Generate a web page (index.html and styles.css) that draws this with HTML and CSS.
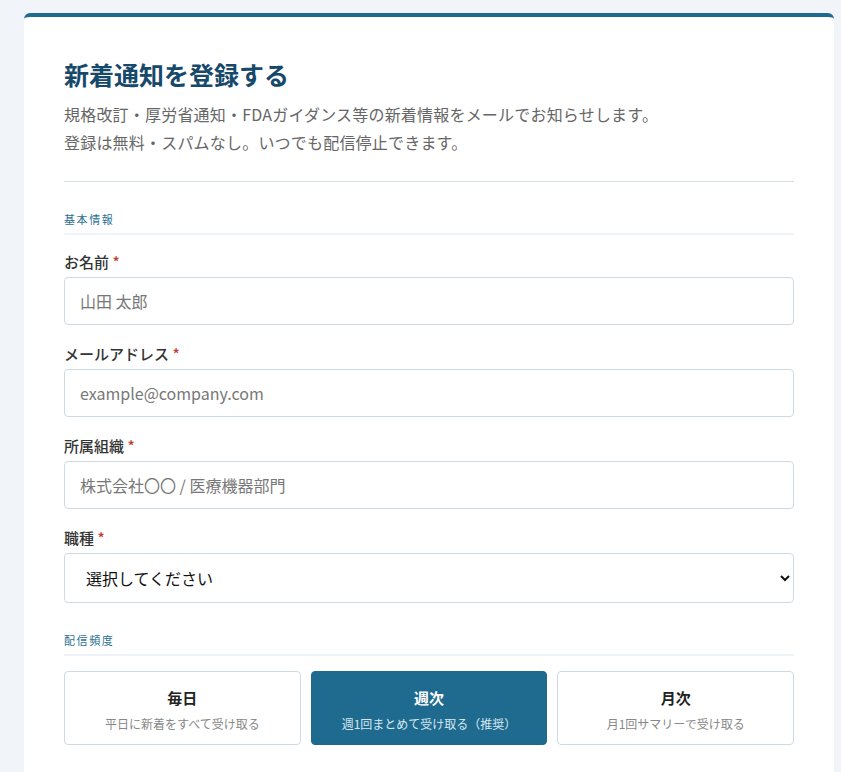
FILE: index.html
```html
<!DOCTYPE html>
<html lang="ja">
<head>
  <meta charset="UTF-8" />
  <title>新着通知を登録する</title>
  <link rel="stylesheet" href="styles.css">
</head>
<body>
  <div class="card">
    <div class="card-head">
      <h1>新着通知を登録する</h1>
      <p class="lead">規格改訂・厚労省通知・FDAガイダンス等の新着情報をメールでお知らせします。<br>登録は無料・スパムなし。いつでも配信停止できます。</p>
    </div>

    <div class="section-title">基本情報</div>

    <div class="field">
      <label for="name">お名前 <span class="req">*</span></label>
      <input id="name" type="text" placeholder="山田 太郎">
    </div>
    <div class="field">
      <label for="email">メールアドレス <span class="req">*</span></label>
      <input id="email" type="email" placeholder="example@company.com">
    </div>
    <div class="field">
      <label for="org">所属組織 <span class="req">*</span></label>
      <input id="org" type="text" placeholder="株式会社〇〇 / 医療機器部門">
    </div>
    <div class="field">
      <label for="job">職種 <span class="req">*</span></label>
      <select id="job">
        <option>選択してください</option>
        <option>品質保証</option>
        <option>薬事</option>
        <option>研究開発</option>
      </select>
    </div>

    <div class="section-title freq-title">配信頻度</div>

    <div class="freq">
      <div class="freq-option">
        <strong>毎日</strong>
        <span>平日に新着をすべて受け取る</span>
      </div>
      <div class="freq-option selected">
        <strong>週次</strong>
        <span>週1回まとめて受け取る（推奨）</span>
      </div>
      <div class="freq-option">
        <strong>月次</strong>
        <span>月1回サマリーで受け取る</span>
      </div>
    </div>
  </div>
</body>
</html>
```

FILE: styles.css
```css
body {
  font-family: "Noto Sans CJK JP", "Noto Sans", sans-serif;
  background: #f1f5f9;
  color: #333;
  margin: 0;
  padding: 13px 7px 0 24px;
}

.card {
  background: #fff;
  border-top: 4px solid #1f6b8f;
  border-radius: 6px 6px 0 0;
  padding: 40px 40px 40px;
  min-height: 760px;
}

.card-head {
  border-bottom: 1px solid #d5dee6;
  padding-bottom: 25px;
}

h1 {
  font-size: 25px;
  line-height: 34px;
  color: #17496a;
  margin: 0 0 9px;
}

.lead {
  margin: 0;
  font-size: 16px;
  line-height: 28px;
  letter-spacing: 0.2px;
  color: #666;
}

.section-title {
  font-size: 11px;
  line-height: 16px;
  letter-spacing: 1.6px;
  color: #2a6f91;
  border-bottom: 2px solid #eef3f7;
  padding-bottom: 6px;
  margin: 29px 0 17px;
}

.freq-title {
  margin-bottom: 15px;
}

.field {
  margin-bottom: 19px;
}

.field label {
  display: block;
  font-size: 15px;
  font-weight: 500;
  line-height: 20px;
  color: #333;
  margin-bottom: 5px;
}

.req {
  color: #c0392b;
}

.field input,
.field select {
  display: block;
  box-sizing: border-box;
  width: 100%;
  height: 48px;
  border: 1px solid #cfd9e2;
  border-radius: 4px;
  padding: 0 15px;
  font-family: inherit;
  font-size: 16px;
  color: #222;
  background: #fff;
}

.field input::placeholder {
  color: #777;
}

.field select {
  height: 50px;
  padding-left: 17px;
  color: #111;
}

.freq {
  display: grid;
  grid-template-columns: repeat(3, 1fr);
  gap: 10px;
}

.freq-option {
  border: 1px solid #cfd9e2;
  border-radius: 4px;
  height: 74px;
  box-sizing: border-box;
  padding-top: 4px;
  display: flex;
  flex-direction: column;
  align-items: center;
  justify-content: center;
  text-align: center;
  cursor: pointer;
}

.freq-option strong {
  font-size: 15px;
  line-height: 22px;
  color: #222;
}

.freq-option span {
  font-size: 12px;
  line-height: 20px;
  margin-top: 5px;
  color: #888;
}

.freq-option.selected {
  background: #1f6b8f;
  border-color: #1f6b8f;
}

.freq-option.selected strong {
  color: #fff;
}

.freq-option.selected span {
  color: #d6e6ef;
}
```
